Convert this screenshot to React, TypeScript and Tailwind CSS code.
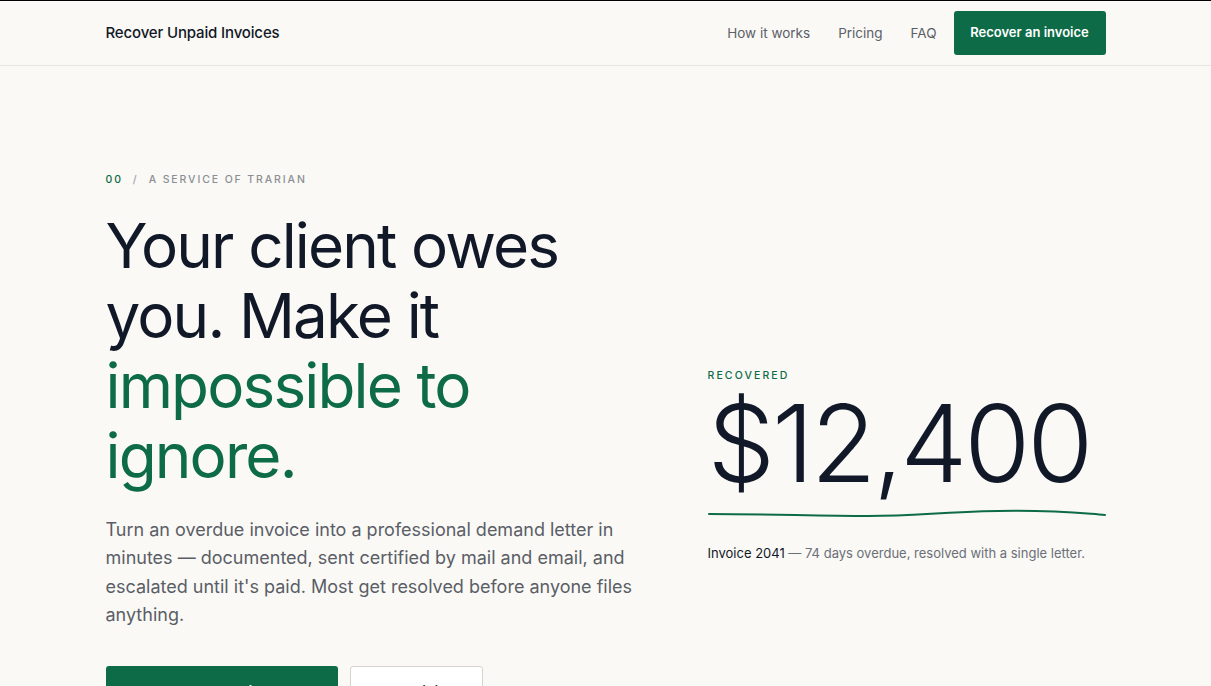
export default function App() {
  const font = { fontFamily: "Inter, 'Liberation Sans', sans-serif" };
  return (
    <div className="min-h-screen bg-[#faf9f6] border-t border-black text-[#111827]" style={font}>
      <header className="border-b border-[#e8e6e1]">
        <div className="mx-auto w-[1000px] h-[64px] flex items-center justify-between">
          <span className="text-[15px] font-medium tracking-[-0.01em]">Recover Unpaid Invoices</span>
          <nav className="flex items-center">
            <a className="text-[13.5px] text-[#5b6068] mr-7">How it works</a>
            <a className="text-[13.5px] text-[#5b6068] mr-7">Pricing</a>
            <a className="text-[13.5px] text-[#5b6068] mr-[17px]">FAQ</a>
            <button className="w-[152px] h-[44px] rounded-[3px] bg-[#0e6b47] text-white text-[13px] font-semibold">
              Recover an invoice
            </button>
          </nav>
        </div>
      </header>

      <main className="mx-auto w-[1000px] pt-[106px] grid grid-cols-[602px_1fr] items-center">
        <div>
          <p className="text-[10.5px] tracking-[0.18em] font-medium">
            <span className="text-[#0e6b47]">00</span>
            <span className="text-[#a3a3a3] mx-[10px]">/</span>
            <span className="text-[#8b8f94]">A SERVICE OF TRARIAN</span>
          </p>
          <h1 className="mt-[23px] w-[560px] text-[62px] leading-[70px] tracking-[-0.03em] font-normal">
            Your client owes you. Make it <span className="text-[#0e6b47]">impossible to ignore.</span>
          </h1>
          <p className="mt-[25px] w-[535px] text-[18px] leading-[28.5px] text-[#5a5e66]">
            Turn an overdue invoice into a professional demand letter in minutes — documented, sent certified by mail and email, and escalated until it's paid. Most get resolved before anyone files anything.
          </p>
          <div className="mt-[36px] flex gap-3">
            <button className="w-[232px] h-[52px] rounded-[3px] bg-[#0e6b47] text-white text-[15px] font-semibold">
              Start recovering →
            </button>
            <button className="w-[133px] h-[52px] rounded-[3px] border border-[#d6d4cf] bg-white text-[15px]">
              See pricing
            </button>
          </div>
        </div>

        <div className="pt-[42px]">
          <p className="text-[10.5px] tracking-[0.2em] font-medium text-[#0e6b47]">RECOVERED</p>
          <p className="mt-[4px] text-[107px] leading-[110px] tracking-[-0.03em] font-light text-[#111827]">$12,400</p>
          <svg className="block mt-[9px]" width="398" height="12" viewBox="0 0 398 12" fill="none">
            <path d="M1 7 C 60 7, 110 9, 160 9 S 230 5, 290 4 S 370 6, 397 8" stroke="#0e6b47" strokeWidth="2" strokeLinecap="round" />
          </svg>
          <p className="mt-[25px] whitespace-nowrap text-[13px] text-[#6b6f76]">
            <span className="text-[#111827]">Invoice 2041</span> — 74 days overdue, resolved with a single letter.
          </p>
        </div>
      </main>
    </div>
  );
}
